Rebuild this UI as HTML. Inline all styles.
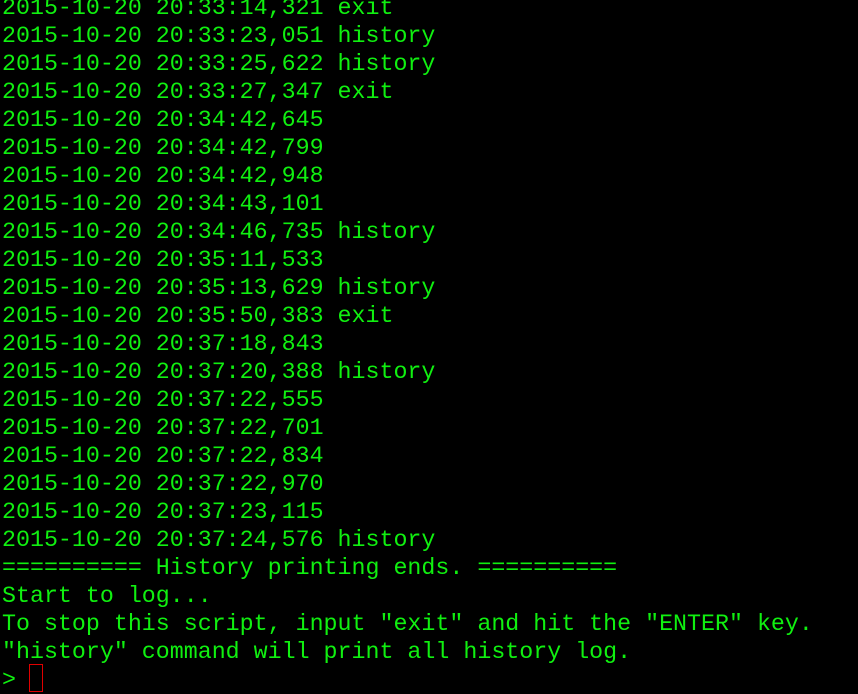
<!DOCTYPE html>
<html><head><style>
html,body{margin:0;padding:0;background:#000;width:858px;height:686px;overflow:hidden}
pre{position:absolute;left:2px;top:-6px;margin:0;font-family:"Liberation Mono",monospace;font-size:23.3px;line-height:28px;color:#10f010;white-space:pre}
.cur{position:absolute;left:29px;top:664px;width:12px;height:26px;border:1.5px solid #e00000}
</style></head><body>
<pre>2015-10-20 20:33:14,321 exit
2015-10-20 20:33:23,051 history
2015-10-20 20:33:25,622 history
2015-10-20 20:33:27,347 exit
2015-10-20 20:34:42,645
2015-10-20 20:34:42,799
2015-10-20 20:34:42,948
2015-10-20 20:34:43,101
2015-10-20 20:34:46,735 history
2015-10-20 20:35:11,533
2015-10-20 20:35:13,629 history
2015-10-20 20:35:50,383 exit
2015-10-20 20:37:18,843
2015-10-20 20:37:20,388 history
2015-10-20 20:37:22,555
2015-10-20 20:37:22,701
2015-10-20 20:37:22,834
2015-10-20 20:37:22,970
2015-10-20 20:37:23,115
2015-10-20 20:37:24,576 history
========== History printing ends. ==========
Start to log...
To stop this script, input "exit" and hit the "ENTER" key.
"history" command will print all history log.
&gt; </pre>
<div class="cur"></div>
</body></html>
